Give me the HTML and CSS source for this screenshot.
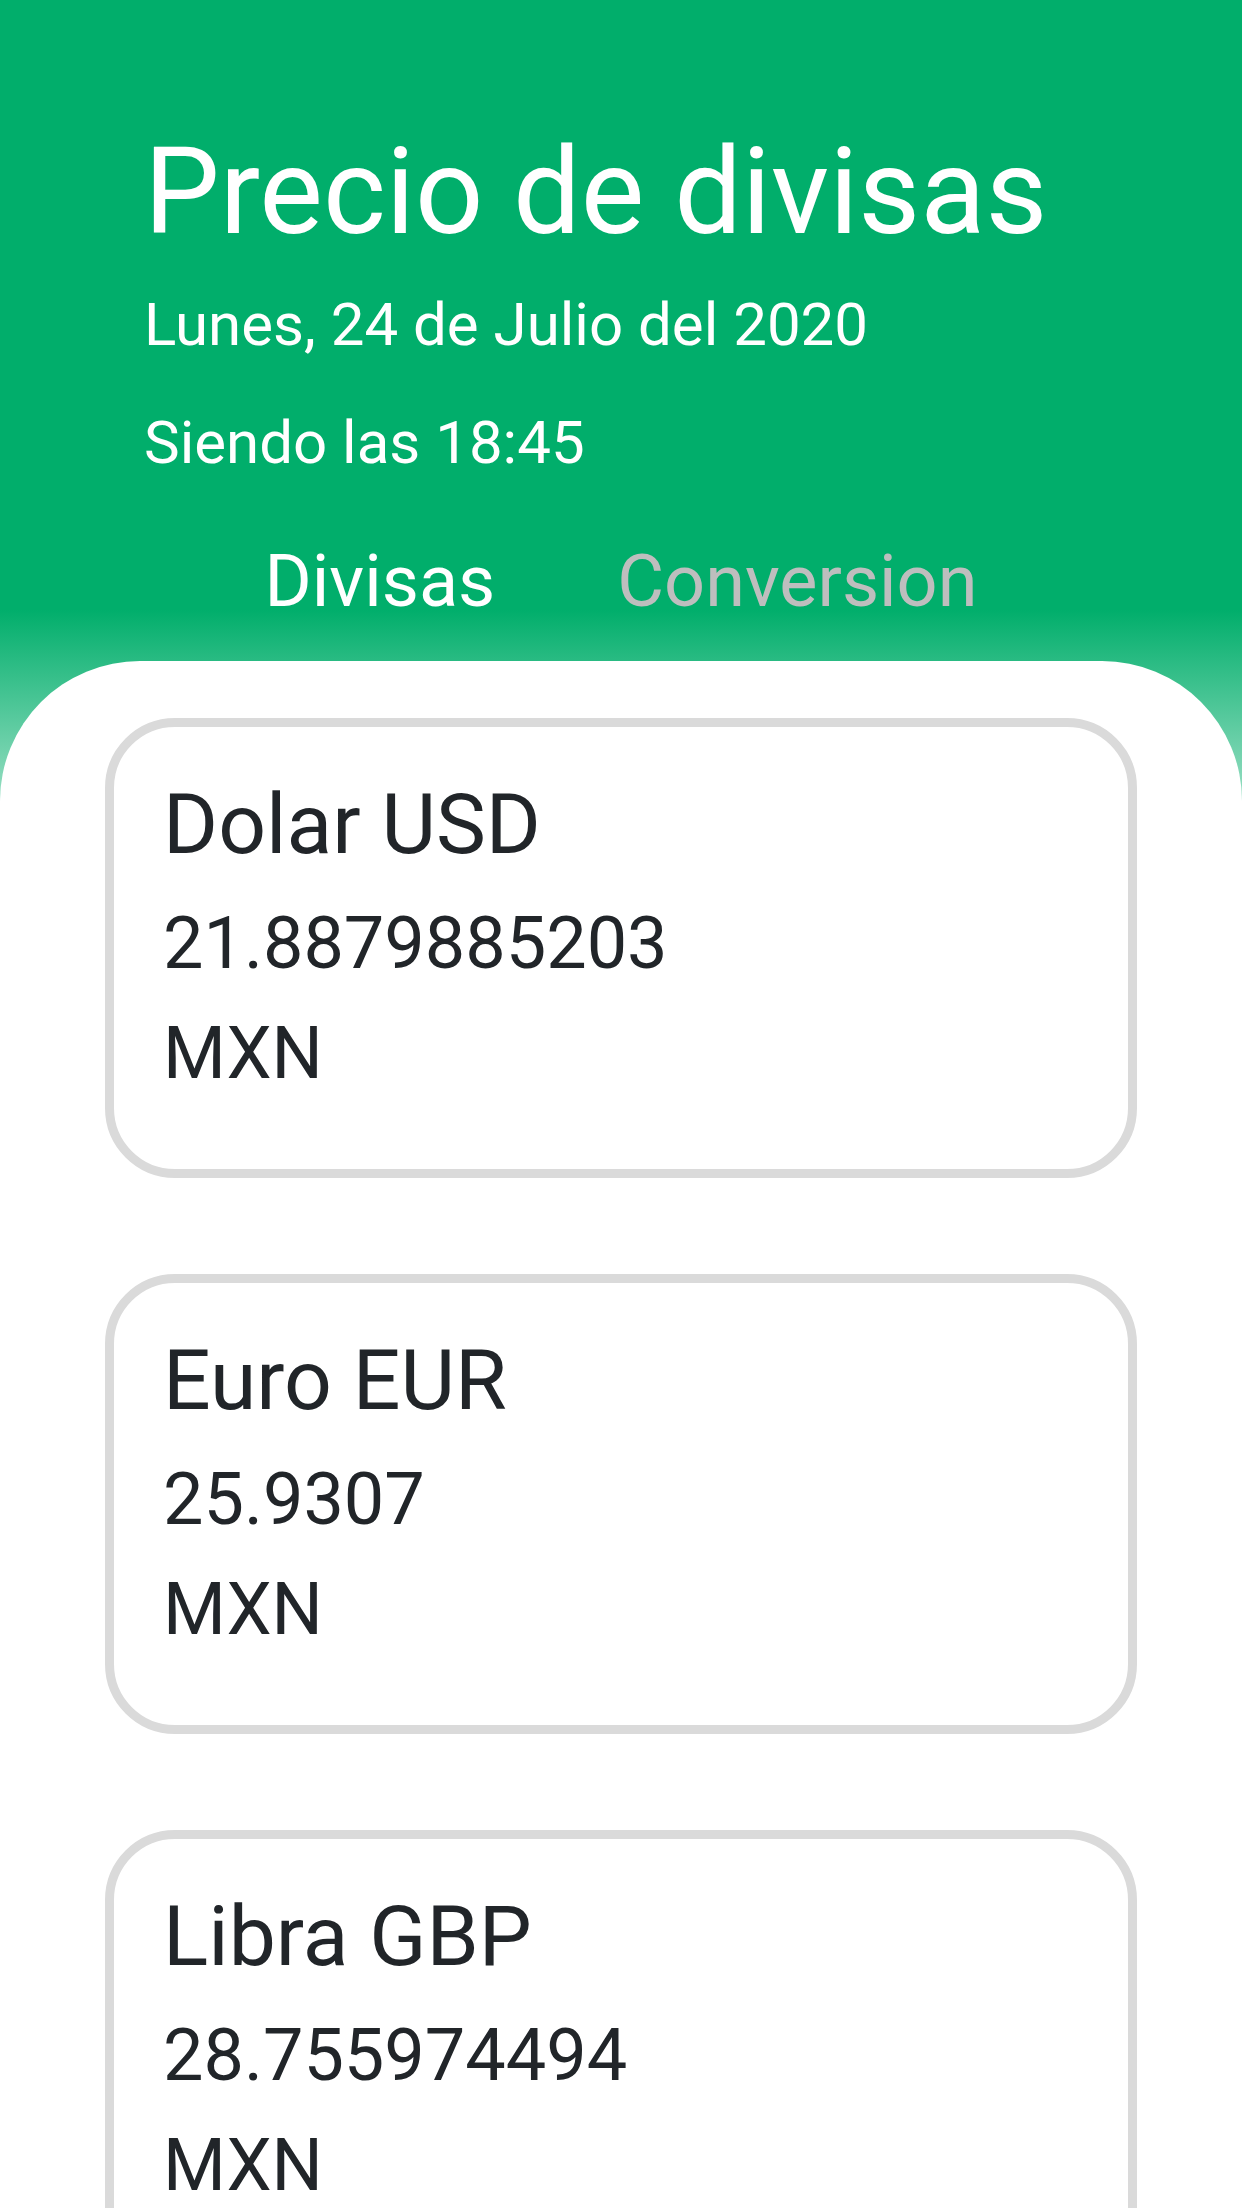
FILE: index.html
```html
<!DOCTYPE html>
<html lang="es">
<head>
<meta charset="utf-8">
<title>Precio de divisas</title>
<link rel="stylesheet" href="styles.css">
</head>
<body>
<div class="app">
  <header class="header">
    <h1 class="title">Precio de divisas</h1>
    <p class="meta">Lunes, 24 de Julio del 2020</p>
    <p class="meta">Siendo las 18:45</p>
    <nav class="tabs">
      <span class="tab tab-active">Divisas</span>
      <span class="tab">Conversion</span>
    </nav>
  </header>
  <main class="panel">
    <section class="card">
      <div class="card-name">Dolar USD</div>
      <div class="card-value">21.8879885203</div>
      <div class="card-value">MXN</div>
    </section>
    <section class="card">
      <div class="card-name">Euro EUR</div>
      <div class="card-value">25.9307</div>
      <div class="card-value">MXN</div>
    </section>
    <section class="card">
      <div class="card-name">Libra GBP</div>
      <div class="card-value">28.755974494</div>
      <div class="card-value">MXN</div>
    </section>
  </main>
</div>
</body>
</html>
```
FILE: styles.css
```css
html, body {
  margin: 0;
  padding: 0;
}

body {
  font-family: Roboto, "Noto Sans", "Liberation Sans", sans-serif;
  background: #ffffff;
  width: 1242px;
  height: 2208px;
  overflow: hidden;
}

.app {
  background: linear-gradient(to bottom, #01ae6b 0px, #01ae6b 610px, #ffffff 930px, #ffffff 100%);
  min-height: 2208px;
}

.header {
  padding: 122px 0 0 144px;
  color: #ffffff;
}

.title {
  margin: 0;
  font-size: 120px;
  font-weight: 400;
  line-height: 140px;
}

.meta {
  margin: 0;
  font-size: 60px;
  line-height: 118px;
}

.meta:first-of-type {
  margin-top: 4px;
}

.tabs {
  display: flex;
  justify-content: center;
  gap: 122px;
  margin: 38px 0 0 -144px;
  font-size: 72px;
  line-height: 84px;
}

.tab {
  color: #bebebe;
}

.tab-active {
  color: #ffffff;
}

.panel {
  margin-top: 37px;
  background: #ffffff;
  border-radius: 140px 140px 0 0;
  padding: 57px 105px 0;
  display: flex;
  flex-direction: column;
  gap: 96px;
}

.card {
  border: 9px solid #dadada;
  border-radius: 70px;
  padding: 34px 40px 60px 49px;
  color: #212529;
}

.card-name {
  font-size: 84px;
  line-height: 128px;
}

.card-value {
  font-size: 72px;
  line-height: 110px;
}
```
